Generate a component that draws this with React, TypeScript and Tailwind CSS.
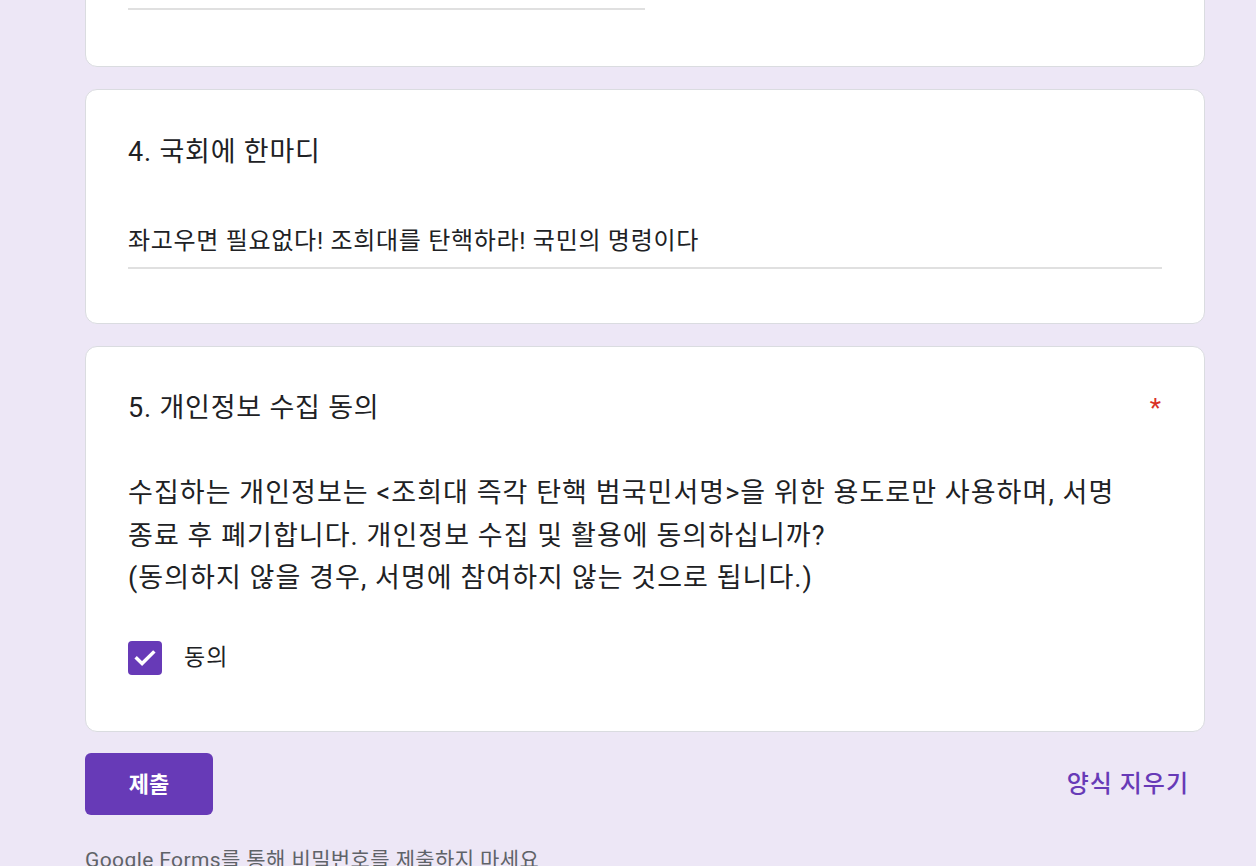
import React from "react";

const font = { fontFamily: "Roboto, 'Noto Sans CJK KR', 'Noto Sans', sans-serif" };

export default function App() {
  return (
    <div
      className="w-full h-[866px] overflow-hidden bg-[#ede7f6] text-[#202124]"
      style={font}
    >
      <div className="ml-[85px] w-[1120px] flex flex-col gap-[22px]">
        {/* Card 1 (cut off) */}
        <div className="mt-[-133px] h-[200px] bg-white border border-[#dadce0] rounded-[12px] flex flex-col justify-end px-[42px] pb-[56px]">
          <div className="w-[517px] h-[2px] bg-[#e0e0e0]" />
        </div>

        {/* Card 2 */}
        <div className="h-[235px] bg-white border border-[#dadce0] rounded-[12px] px-[42px] pt-[44px]">
          <div className="text-[27px] leading-[36px] tracking-[0.8px]">4. 국회에 한마디</div>
          <div className="mt-[55px] text-[24px] leading-[32px] tracking-[0.7px] pb-[10px] border-b-2 border-[#e0e0e0]">
            좌고우면 필요없다! 조희대를 탄핵하라! 국민의 명령이다
          </div>
        </div>

        {/* Card 3 */}
        <div className="h-[386px] bg-white border border-[#dadce0] rounded-[12px] px-[42px] pt-[43px]">
          <div className="flex justify-between items-center">
            <div className="text-[27px] leading-[36px] tracking-[0.8px]">5. 개인정보 수집 동의</div>
            <div className="text-[#d93025] text-[26px] leading-[36px] pr-[1px]">*</div>
          </div>
          <div className="mt-[46px] text-[27px] leading-[42.5px] tracking-[1.05px] whitespace-nowrap">
            수집하는 개인정보는 &lt;조희대 즉각 탄핵 범국민서명&gt;을 위한 용도로만 사용하며, 서명
            <br />
            종료 후 폐기합니다. 개인정보 수집 및 활용에 동의하십니까?
            <br />
            (동의하지 않을 경우, 서명에 참여하지 않는 것으로 됩니다.)
          </div>
          <div className="mt-[41px] flex items-center gap-[22px]">
            <div className="w-[34px] h-[34px] rounded-[4px] bg-[#673ab7] flex items-center justify-center">
              <svg width="26" height="26" viewBox="0 0 24 24" fill="none">
                <path
                  d="M4.5 12.5l4.8 4.6L19.5 7"
                  stroke="white"
                  strokeWidth="3.2"
                  strokeLinecap="square"
                />
              </svg>
            </div>
            <div className="text-[23px] leading-[34px] tracking-[1px]">동의</div>
          </div>
        </div>

        {/* Buttons */}
        <div className="mt-[-1px] flex justify-between items-center">
          <div className="w-[128px] h-[62px] rounded-[6px] bg-[#673ab7] text-white flex items-center justify-center text-[22px] font-bold">
            제출
          </div>
          <div className="text-[#673ab7] text-[24px] font-medium tracking-[1px] pr-[16px]">양식 지우기</div>
        </div>
        <div className="mt-[10px] text-[21px] leading-[26px] tracking-[0.4px] text-[#5f6368]">
          Google Forms를 통해 비밀번호를 제출하지 마세요
        </div>
      </div>
    </div>
  );
}
